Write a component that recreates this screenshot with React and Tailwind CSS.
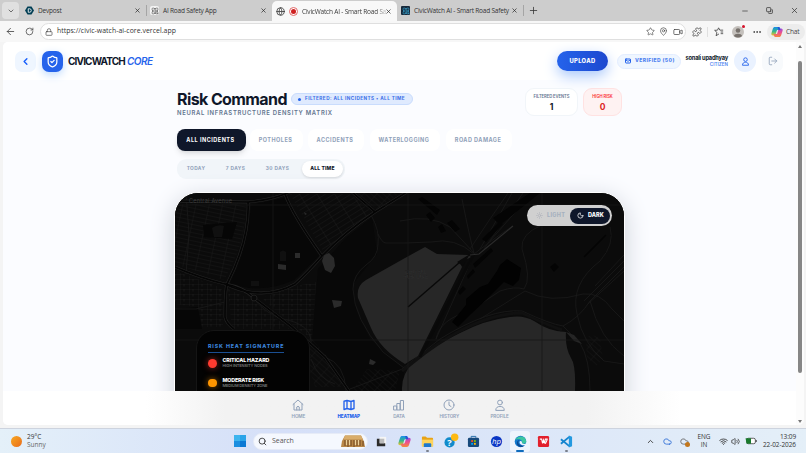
import React from 'react';
import {
  ArrowLeft, RotateCw, Lock, Star, MapPin, Video, Puzzle, Ellipsis, ChevronDown, ChevronLeft, ChevronUp,
  X, Plus, Minus, Copy, Globe, ShieldCheck, Mail, LogOut, Search, Wifi, Volume2, Sun, Moon, Cloud, Atom,
} from 'lucide-react';

const filters = [
  { label: 'ALL INCIDENTS', box: 'w-[69px] mr-[4px] bg-[#0f172a] text-white shadow-md', text: 'tracking-[0.5px]' },
  { label: 'POTHOLES', box: 'w-[53px] mr-[5px] bg-white text-slate-400', text: 'tracking-[0.5px]' },
  { label: 'ACCIDENTS', box: 'w-[56px] mr-[6px] bg-white text-slate-400', text: 'tracking-[0.5px]' },
  { label: 'WATERLOGGING', box: 'w-[70px] mr-[6px] bg-white text-slate-400', text: 'tracking-[0.5px]' },
  { label: 'ROAD DAMAGE', box: 'w-[66px] bg-white text-slate-400', text: 'tracking-[0.46px]' },
];

const ranges = [
  { label: 'TODAY', box: 'w-[38px]' },
  { label: '7 DAYS', box: 'w-[41px]' },
  { label: '30 DAYS', box: 'w-[43px]' },
];

const heatLevels = [
  { title: 'CRITICAL HAZARD', sub: 'HIGH INTENSITY NODES', dot: 'bg-[#ff3b30] shadow-[0_0_6px_#ff3b3099]' },
  { title: 'MODERATE RISK', sub: 'MEDIUM DENSITY ZONE', dot: 'bg-[#ff9500] shadow-[0_0_6px_#ff950099]' },
];

function PersonIcon({ className }) {
  return (
    <svg viewBox="0 0 24 24" className={className} fill="none" stroke="currentColor" strokeWidth="2.400" strokeLinejoin="round">
      <circle cx="12" cy="7" r="4.800" />
      <path d="M4 22c0-5.500 3.500-8 8-8s8 2.500 8 8z" />
    </svg>
  );
}

function CopilotIcon({ className }) {
  return (
    <svg viewBox="0 0 24 24" className={className}>
      <defs>
        <linearGradient id="cpA" x1="0" y1="0" x2="0" y2="1">
          <stop offset="0" stopColor="#1a8fe8" />
          <stop offset="0.5" stopColor="#32b58c" />
          <stop offset="1" stopColor="#f5c426" />
        </linearGradient>
        <linearGradient id="cpB" x1="0" y1="0" x2="0" y2="1">
          <stop offset="0" stopColor="#a04be0" />
          <stop offset="0.5" stopColor="#ee4f8d" />
          <stop offset="1" stopColor="#f58a3c" />
        </linearGradient>
      </defs>
      <path d="M8 2h7c2 0 2.600 1.200 3.100 3L19 8h-5c-2 0-2.500 1-3 3l-1.500 5c-.5 2-1.300 3-3 3H4c-3 0-4-2-3-5l2.500-8C4.500 3 5.500 2 8 2z" fill="url(#cpA)" />
      <path d="M16 22H9c-2 0-2.600-1.200-3.100-3L5 16h5c2 0 2.500-1 3-3l1.500-5c.5-2 1.300-3 3-3H20c3 0 4 2 3 5l-2.500 8c-1 3-2 4-4.500 4z" fill="url(#cpB)" />
      <path d="M13 2h2c2 0 2.600 1.200 3.100 3L19 8h-4z" fill="#2257d6" />
    </svg>
  );
}

function Tab({ icon, title, box, active }) {
  return (
    <div className={`flex h-full items-center ${box} ${active ? 'rounded-t-[5px] bg-[#f8f8f8]' : ''}`}>
      {icon}
      <span className="min-w-0 flex-1 whitespace-nowrap text-[6.500px] tracking-[-0.2px] text-[#333]">{title}</span>
      <X className="mr-[5px] ml-[3px] size-[7px] shrink-0 text-[#222]" strokeWidth={2.300} />
    </div>
  );
}

function TabBar() {
  return (
    <div className="flex h-[21px] items-center bg-[#cdcdcd]">
      <div className="ml-[2px] mr-[2px] flex size-[17px] items-center justify-center rounded-[4px] bg-[#e0e0e0]">
        <ChevronDown className="size-[8px] text-[#333]" strokeWidth={2} />
      </div>
      <Tab
        box="w-[125px] pl-[4px]"
        title="Devpost"
        icon={
          <svg viewBox="0 0 18 18" className="mr-[4px] size-[9px]">
            <path d="M5 1h8l5 8-5 8H5L0 9z" fill="#003e54" />
            <path d="M6.500 5.500h2.500a3.500 3.500 0 0 1 0 7H6.500z" fill="none" stroke="#fff" strokeWidth="1.700" />
          </svg>
        }
      />
      <div className="h-[11px] w-px bg-[#a5a5a5]" />
      <Tab
        box="w-[125px] pl-[3px]"
        title="AI Road Safety App"
        icon={
          <span className="mr-[4px] flex size-[9px] items-center justify-center rounded-[2px] bg-[#f4f4f4]">
            <Atom className="size-[8px] text-[#555]" />
          </span>
        }
      />
      <Tab
        active
        box="w-[125px] mt-[2px] pl-[4px]"
        title={<span className="bg-gradient-to-r from-[#333] from-88% to-[#333]/20 bg-clip-text text-transparent">CivicWatch AI - Smart Road Sa</span>}
        icon={
          <>
            <Globe className="mr-[4px] size-[9px] shrink-0 text-[#444]" strokeWidth={2.300} />
            <span className="mr-[4px] flex size-[9px] shrink-0 items-center justify-center rounded-full border border-[#e06a6a] bg-white">
              <span className="size-[5px] rounded-full bg-[#cf2020]" />
            </span>
          </>
        }
      />
      <Tab
        box="w-[126px] pl-[4px]"
        title="CivicWatch AI - Smart Road Safety"
        icon={
          <span className="mr-[4px] flex size-[9px] shrink-0 items-center justify-center rounded-[1px] bg-[#16283a]">
            <Atom className="size-[8px] text-[#3aa6d0]" />
          </span>
        }
      />
      <div className="h-[11px] w-px bg-[#a5a5a5]" />
      <Plus className="ml-[4px] size-[11px] text-[#333]" strokeWidth={1.700} />
      <div className="ml-auto mr-[7px] flex items-center gap-[17px] text-[#333]">
        <Minus className="size-[8px]" />
        <Copy className="size-[7px] -scale-x-100 rotate-90" strokeWidth={2.500} />
        <X className="size-[9px]" strokeWidth={1.900} />
      </div>
    </div>
  );
}

function Toolbar() {
  return (
    <div className="flex h-[21px] items-center bg-[#f7f7f7] text-[#444]">
      <ArrowLeft className="ml-[5px] size-[11px]" strokeWidth={1.800} />
      <RotateCw className="ml-[9px] mr-[6px] size-[9px]" strokeWidth={2} />
      <div className="flex h-[17px] w-[646px] items-center rounded-full border border-[#dfdfdf] bg-white pl-[4px] pr-[2px]">
        <Lock className="size-[8px]" strokeWidth={2} />
        <span className="ml-[4px] text-[6.900px] tracking-[0.04px] text-[#333]">https://civic-watch-ai-core.vercel.app</span>
        <Star className="ml-auto size-[9px]" strokeWidth={1.700} />
        <MapPin className="ml-[4px] size-[9px]" strokeWidth={1.800} />
        <Video className="ml-[5px] size-[10px]" strokeWidth={1.800} />
      </div>
      <Puzzle className="ml-[6px] size-[10px]" strokeWidth={1.900} />
      <div className="ml-[5px] h-[10px] w-px bg-[#e0e0e0]" />
      <svg viewBox="0 0 24 24" className="ml-[6px] size-[10px]" fill="none" stroke="currentColor" strokeWidth="2" strokeLinejoin="round">
        <path d="M12 16.500 5 21l2-8-5.500-5 7-.5L11 2l3 5.500h8M16 12h6M16 16h6" />
      </svg>
      <div className="relative ml-[8px] size-[12px] overflow-visible rounded-full bg-[#c4c0bc]">
        <svg viewBox="0 0 12 12" className="size-[12px]" fill="#77716c">
          <circle cx="6" cy="4.500" r="2.300" />
          <path d="M2 10c.5-3 7.500-3 8 0a6 6 0 0 1-8 0z" />
        </svg>
        <span className="absolute -right-px -top-px size-[3px] rounded-full bg-[#d3122a]" />
      </div>
      <Ellipsis className="ml-[8px] size-[10px]" strokeWidth={2.300} />
      <div className="ml-[5px] flex h-[16px] w-[38px] items-center rounded-full bg-[#ececec] pl-[4px]">
        <CopilotIcon className="size-[12px]" />
        <span className="ml-[3px] text-[6.600px] tracking-[-0.2px]">Chat</span>
      </div>
    </div>
  );
}

function Header() {
  return (
    <header className="relative z-10 flex h-[38px] shrink-0 items-center bg-white pl-[12px] pr-[13px]">
      <button className="flex size-[21px] items-center justify-center rounded-[7px] bg-[#eff6ff]">
        <ChevronLeft className="size-[11px] text-blue-600" strokeWidth={3} />
      </button>
      <div className="ml-[6px] flex size-[21px] items-center justify-center rounded-[7px] bg-[#2563eb] shadow-[0_3px_8px_#bfdbfe]">
        <ShieldCheck className="size-[13px] text-white" strokeWidth={2.300} />
      </div>
      <span className="ml-[5px] w-[59px] whitespace-nowrap text-[10px] font-bold tracking-[-0.84px] text-[#0f172a]">CIVICWATCH</span>
      <span className="text-[10px] font-semibold italic tracking-[-0.5px] text-[#2563eb]">CORE</span>
      <button className="ml-auto flex h-[20px] w-[51px] items-center justify-center rounded-full bg-gradient-to-r from-[#2563eb] to-[#1d48cf] text-[5.800px] font-extrabold tracking-[0.35px] text-white shadow-[0_5px_14px_#a9c8fb]">
        UPLOAD
      </button>
      <div className="ml-[9px] flex h-[15px] w-[64px] items-center rounded-full border border-[#e3edff] bg-[#eff6ff] pl-[7px] text-[#2563eb]">
        <Mail className="mr-[4px] size-[6px]" strokeWidth={4} />
        <span className="whitespace-nowrap text-[5px] font-extrabold tracking-[0.42px] text-[#4f83f0]">VERIFIED (50)</span>
      </div>
      <div className="ml-[5px] flex w-[42px] flex-col items-end whitespace-nowrap">
        <span className="text-[5.700px] font-bold leading-[6px] tracking-[-0.2px] text-[#0f172a]">sonali upadhyay</span>
        <span className="mt-[1px] text-[4.500px] font-semibold leading-[5px] tracking-[0.05px] text-[#4f83f0]">CITIZEN</span>
      </div>
      <div className="ml-[6px] flex size-[22px] items-center justify-center rounded-full bg-[#eaf2ff]">
        <PersonIcon className="size-[9px] text-[#2563eb]" />
      </div>
      <div className="ml-[6px] flex size-[21px] items-center justify-center rounded-[7px] bg-[#f8fafc]">
        <LogOut className="size-[10px] text-slate-400" strokeWidth={2} />
      </div>
    </header>
  );
}

function CityMap() {
  const arterial = [
    'M175 202 L248 203 Q270 201 285 195 L290 193',
    'M248 203 Q250 240 227 285 Q225 292 225 318 Q226 324 234 330',
    'M285 195 Q292 215 322 257',
    'M175 268 Q200 279 225 285 Q243 288 254 299 L292 328 L325 358 L349 392',
    'M225 285 Q262 303 295 285 Q308 273 322 257 Q345 233 375 213 L407 193',
    'M352 193 L375 213',
  ];
  const minor = [
    'M371 216 Q380 232 378 245 Q378 258 366 266 Q353 276 353 290 Q354 320 383 353 L404 369',
    'M378 235 Q382 244 386 244 H405 L431 243 Q455 238 474 255',
    'M175 310 H196 L225 303 M186 194 L189 235 L186 275 M254 300 Q266 315 283 320 Q310 325 311 342',
    'M474 255 L436 340 M436 340 Q440 320 470 312 L500 292 Q515 287 524 290 Q532 280 522 250 Q520 235 542 226',
    'M480 320 L525 292 Q550 305 583 295 Q600 293 612 310 L624 322',
    'M400 222 Q430 215 450 228 L474 254 M462 200 Q470 240 474 254',
    'M402 370 L440 340 Q490 309 522 312 Q550 325 563 327 Q580 318 590 302 L624 268',
    'M474 255 Q500 235 513 227',
    'M610 228 Q615 245 600 262 Q570 285 577 315 Q583 345 604 362 L624 365 M590 302 Q600 340 624 357 M563 327 L580 344 Q590 360 590 392',
    'M480 250 L512 194 M484 250 L523 194 M490 242 L532 194 M470 250 L490 220 L508 194',
    'M584 302 L624 262 M588 305 L624 272 M595 287 L624 256',
    'M325 358 Q345 365 346 392 M311 360 Q318 380 335 385 M405 369 L350 390',
  ];
  return (
    <svg viewBox="175 194 449 198" className="h-full w-full" preserveAspectRatio="xMinYMin slice" fill="none">
      <defs>
        <pattern id="blocksA" width="13" height="4" patternUnits="userSpaceOnUse" patternTransform="rotate(12)">
          <path d="M0 0H13M0 0V4" stroke="#202020" strokeWidth="0.700" />
        </pattern>
        <pattern id="blocksB" width="15" height="4.500" patternUnits="userSpaceOnUse" patternTransform="rotate(-32)">
          <path d="M0 0H15M0 0V4.500" stroke="#1f1f1f" strokeWidth="0.700" />
        </pattern>
        <pattern id="blocksC" width="9" height="5" patternUnits="userSpaceOnUse">
          <path d="M0 0H9M0 0V5M4 0V2.500" stroke="#1c1c1c" strokeWidth="0.700" />
        </pattern>
        <pattern id="blocksD" width="10" height="4" patternUnits="userSpaceOnUse" patternTransform="rotate(42)">
          <path d="M0 0H10M0 0V4" stroke="#1d1d1d" strokeWidth="0.600" />
        </pattern>
      </defs>
      <rect x="175" y="194" width="449" height="198" fill="#0b0b0b" />
      <path d="M345 240 L372 218 L377 255 L353 285 L356 310 L370 340 L404 370 L404 392 H350 L312 345 L318 270z" fill="#080808" />
      <path d="M251 206 L284 199 L319 257 L294 281 Q260 296 230 284 Q248 250 251 206z" fill="#070707" />
      <path d="M175 205 H246 Q246 245 224 281 L175 265z" fill="url(#blocksA)" />
      <path d="M203 226 L237 223 L232 240 L204 238z M175 310 L198 308 L202 330 H175z" fill="#060606" />
      <path d="M290 195 H350 L372 213 L323 252z" fill="url(#blocksB)" />
      <path d="M354 194 H400 L377 210z" fill="url(#blocksD)" />
      <path d="M175 272 L222 289 L223 328 H202 L198 308 L175 305z" fill="url(#blocksC)" />
      <path d="M228 290 L252 301 L290 330 H232z M262 299 L296 287 L316 283 L312 340 L285 320z" fill="url(#blocksC)" />
      <path d="M292 330 L312 340 L325 355 L346 388 L315 388 L300 340z M367 370 L400 372 L395 392 H352z" fill="url(#blocksD)" />
      <path d="M175 203 H248 L286 195" stroke="#202020" strokeWidth="0.600" />

      <path d="M405 259 L425 248 L437 255 L468 256 L471 258 L460 264 L462 268 L418 357 L405 365 Q380 350 371 329 L358 299 Q356 287 366 281z" fill="#272727" />
      <path d="M402 392 Q401 375 414 363 Q440 343 460 334 Q485 321 510 318 Q524 316 534 322 Q550 333 566 333 Q565 349 571 359 Q576 366 575 392z" fill="#272727" />
      <path d="M457 263 L470 255 L463 267z" fill="#0a0a0a" />
      <path d="M460 263 L408 308" stroke="#090909" strokeWidth="1.500" />
      <path d="M324 256 L329 254 L334 259 L335 267 L331 274 L325 271 L322 262z M295 254 h5v5h-5z M278 265 l8 1v5l-8-1z M332 301 l10 1 -1 5 -7 2z M370 360 l6 3 -3 3 -4-1z M304 213 l3 2 -2 1z" fill="#2b2b2b" />
      <path d="M280 253 q3-3 6 0 v9h-6z M212 229 q5-4 12-2 l-2 11 -8 0z M251 282 h8v5h-8z" fill="#101010" />

      {minor.map((d) => <path key={d} d={d} stroke="#1b1b1b" strokeWidth="0.800" />)}
      {arterial.map((d) => <path key={d} d={d} stroke="#242424" strokeWidth="2.800" />)}
      {arterial.map((d) => <path key={d + 'in'} d={d} stroke="#050505" strokeWidth="1.700" />)}
      <path d="M402 372 L425 354 Q480 314 522 314 Q545 325 562 331" stroke="#101010" strokeWidth="3" />
      <path d="M474 255 L420 358" stroke="#090909" strokeWidth="2.500" />
      <path d="M470 256 L479 255 L513 227" stroke="#2b2b2b" strokeWidth="1.200" />
      <path d="M566 333 L574 336 L582 345 L574 342z" fill="#252525" />
      <circle cx="254" cy="299" r="3" fill="#090909" stroke="#242424" strokeWidth="0.800" />

      <path d="M497 272 L500 266 L507 260 L521 269 L519 281 L513 287 L504 283 L487 300 L470 316 L458 328 L452 323 L466 306 L466 300 L480 288 L488 285z" fill="#020202" />
      <path d="M418 200 l4-2 18 13 -3 5z M426 216 l4-3 5 6 -4 4z M438 228 l4-3 4 7 -5 2z M447 224 l5-3 8 9 -5 3z M550 268 l5-4 4 4 -5 5z M493 219 L530 194 h10 L500 226z M482 240 l18-18 3 3 -17 18z M473 265 l18-16 2 3 -18 17z M467 277 l6-7 2 3 -7 7z M458 293 l5-6 3 3 -6 6z" fill="#040404" />
      <path d="M584 258 L606 236" stroke="#040404" strokeWidth="1.500" />
      <path d="M586 338 q8-4 14 2 l3 20 -8 8 -8-10z" fill="url(#blocksD)" />
      <path d="M273 194V392 M408 194V392 M542 194V392 M175 206H624 M175 341H624" stroke="#181818" strokeWidth="0.800" />
      <text x="189" y="204" fontSize="5.500" fill="#3c3c3c" textLength="43">Central Avenue</text>
      <g fill="#0c0c0c" stroke="#444" strokeWidth="0.200" fontSize="4.600" textAnchor="middle">
        <text x="415.500" y="275">CENTRAL</text>
        <text x="415.500" y="280">PARK LAKE</text>
      </g>
    </svg>
  );
}

function MapPanel() {
  return (
    <div className="relative -mx-[3px] mt-[13px] h-[260px] shrink-0 overflow-hidden rounded-[24px] border-[1.500px] border-white bg-[#0b0b0b] shadow-[0_6px_24px_#cbd0d8]">
      <div className="h-[198px]">
        <CityMap />
      </div>
      <div className="absolute right-[12px] top-[12px] flex h-[21px] w-[85px] items-center rounded-full bg-[#d0d0d0] pl-[9px] text-[5.500px] font-extrabold">
        <Sun className="size-[7px] text-[#b0b5bd]" strokeWidth={2.500} />
        <span className="ml-[4px] tracking-[0.3px] text-[#a6b0bf]">LIGHT</span>
        <span className="absolute right-[2px] flex h-[16px] w-[40px] items-center rounded-full bg-[#0f172a] pl-[7px] text-white">
          <Moon className="mr-[4px] size-[7px]" strokeWidth={2.500} />
          <span className="tracking-[0.05px]">DARK</span>
        </span>
      </div>
      <div className="absolute left-[21px] top-[137px] h-[110px] w-[114px] rounded-[18px] border border-[#151515] bg-[#030303] pl-[11px] pt-[12px]">
        <div className="mb-px h-[9.500px] w-fit whitespace-nowrap border-b border-[#1b4f92] text-[5.300px] font-extrabold leading-[6px] tracking-[0.86px] text-[#3b82d9]">
          RISK HEAT SIGNATURE
        </div>
        {heatLevels.map((level) => (
          <div key={level.title} className="flex h-[19.500px] items-center">
            <span className={`size-[8.500px] shrink-0 rounded-full ${level.dot}`} />
            <div className="-mt-px ml-[6px] flex flex-col whitespace-nowrap">
              <span className="text-[5.300px] font-extrabold leading-[6px] tracking-[-0.16px] text-white">{level.title}</span>
              <span className="text-[4px] font-semibold leading-[5px] tracking-[-0.13px] text-[#777]">{level.sub}</span>
            </div>
          </div>
        ))}
      </div>
    </div>
  );
}

function RiskCommand() {
  return (
    <main className="flex flex-col pl-[174px] pr-[174px] pt-[8px]">
      <div className="flex h-[41px] items-start">
        <div>
          <div className="flex h-[22px] items-center">
            <h1 className="w-[110px] whitespace-nowrap text-[16px] font-bold leading-none tracking-[-0.6px] text-[#0f172a]">Risk Command</h1>
            <div className="ml-[4px] flex h-[12px] w-[122px] items-center rounded-full border border-[#c9dcfd] bg-[#dfeafe] pl-[6px]">
              <span className="mr-[4px] size-[3px] rounded-full bg-[#2563eb]" />
              <span className="whitespace-nowrap text-[4.700px] font-bold tracking-[0.42px] text-[#3b6fe8]">FILTERED: ALL INCIDENTS • ALL TIME</span>
            </div>
          </div>
          <p className="mt-px text-[5.900px] font-semibold leading-[4px] tracking-[0.7px] text-slate-500">NEURAL INFRASTRUCTURE DENSITY MATRIX</p>
        </div>
        <div className="ml-auto flex gap-[5px] text-center">
          <div className="h-[28px] w-[53px] rounded-[9px] border border-slate-100 bg-white pt-[5px]">
            <p className="text-[4.200px] font-semibold leading-[5px] tracking-[-0.08px] text-slate-500">FILTERED EVENTS</p>
            <p className="mt-[2px] text-[8.500px] font-bold leading-[12px] text-[#0f172a]">1</p>
          </div>
          <div className="h-[28px] w-[39px] rounded-[9px] border border-red-100 bg-[#fef2f2] pt-[5px]">
            <p className="text-[4.200px] font-semibold leading-[5px] tracking-[-0.08px] text-red-500">HIGH RISK</p>
            <p className="mt-[2px] text-[8.500px] font-bold leading-[12px] text-[#dc2626]">0</p>
          </div>
        </div>
      </div>

      <div className="-ml-[0.500px] flex h-[22px]">
        {filters.map((f) => (
          <button key={f.label} className={`whitespace-nowrap rounded-[8px] pr-px text-center text-[5.500px] font-bold ${f.box} ${f.text}`}>
            {f.label}
          </button>
        ))}
      </div>

      <div className="mt-[8px] flex h-[20px] w-[168px] items-center rounded-[9px] bg-[#f1f5f9] text-[4.800px] font-bold tracking-[0.4px] text-slate-400">
        {ranges.map((r) => (
          <span key={r.label} className={`text-center ${r.box}`}>{r.label}</span>
        ))}
        <span className="ml-[3px] flex h-[16px] w-[41px] items-center justify-center rounded-[8px] bg-white text-[5px] font-extrabold tracking-[0.15px] text-[#0f172a] shadow-sm">
          ALL TIME
        </span>
      </div>

      <MapPanel />
    </main>
  );
}

function NavItem({ label, active, children }) {
  return (
    <div className={`flex w-[50.300px] flex-col items-center ${active ? 'text-[#2563eb]' : 'text-slate-400'}`}>
      <svg viewBox="0 0 24 24" className="size-[12px]" fill="none" stroke="currentColor" strokeWidth={active ? 2.700 : 2} strokeLinejoin="round" strokeLinecap="round">
        {children}
      </svg>
      <span className={`mt-[3px] text-[4.600px] leading-[5px] tracking-[-0.1px] ${active ? 'font-extrabold' : 'font-semibold'}`}>{label}</span>
    </div>
  );
}

function BottomNav() {
  return (
    <nav className="absolute inset-x-0 bottom-0 z-10 flex h-[34px] justify-center bg-gradient-to-r from-white from-18% via-[#f2f2f2] via-28% to-[#f2f2f2] pr-px pt-[7.500px]">
      <div className="absolute inset-y-0 right-0 w-[210px] bg-gradient-to-r from-[#f2f2f2] to-white to-45%" />
      <NavItem label="HOME">
        <path d="M2 11 12 2l10 9M4 10v12h16V10M9.500 22v-6q2.500-3 5 0v6" />
      </NavItem>
      <NavItem label="HEATMAP" active>
        <path d="M2 4.500 8 3v16l-6 2zM8 3l8 2v16l-8-2zM16 5l6-2v16l-6 2z" />
      </NavItem>
      <NavItem label="DATA">
        <path d="M2 14h5.500v8H2zM8.500 9H14v13H8.500zM15.500 3H21v19h-5.500z" />
      </NavItem>
      <NavItem label="HISTORY">
        <circle cx="12" cy="12" r="10" />
        <path d="M12 6v6.500l4 2.500" />
      </NavItem>
      <NavItem label="PROFILE">
        <circle cx="12" cy="7" r="4.800" />
        <path d="M3.500 22c0-5 3.500-7 8.500-7s8.500 2 8.500 7z" />
      </NavItem>
    </nav>
  );
}

function TaskIcon({ children, active, running }) {
  return (
    <div className={`relative flex h-[21px] w-[20px] items-center justify-center rounded-[3px] ${active ? 'bg-[#eef4fd]' : ''}`}>
      <svg viewBox="0 0 14 14" className="size-[13px] overflow-visible">{children}</svg>
      {active && <span className="absolute bottom-0 h-[1.500px] w-[8px] rounded-full bg-[#0f6cbd]" />}
      {running && <span className="absolute bottom-0 h-[1.500px] w-[3px] rounded-full bg-[#7a808c]" />}
    </div>
  );
}

function Taskbar() {
  return (
    <div className="flex h-[25px] items-center border-t border-[#cdd3de] bg-gradient-to-r from-[#e4f0f9] via-[#d5dff8] via-35% to-[#e4eff8] text-[6.500px] text-[#333]">
      <div className="ml-[11px] size-[11px] rounded-full bg-gradient-to-br from-[#f6a821] to-[#e96b1c]" />
      <div className="ml-[5px] w-[207px] leading-[8.500px]">
        <p>29°C</p>
        <p className="text-[#666]">Sunny</p>
      </div>
      <div className="grid size-[12px] grid-cols-2 gap-[0.700px]">
        <span className="bg-[#3db4ee]" />
        <span className="bg-[#2aa3e8]" />
        <span className="bg-[#1a8ee0]" />
        <span className="bg-[#0a78d4]" />
      </div>
      <div className="ml-[7px] flex h-[17px] w-[115px] items-center rounded-full border border-[#e6ebf7] bg-[#f5f8fe] pl-[4px]">
        <Search className="size-[9px]" strokeWidth={2.300} />
        <span className="ml-[5px] text-[7px] tracking-[-0.05px] text-[#555]">Search</span>
        <svg viewBox="0 0 26 14" className="ml-auto mr-[1px] h-[14px] w-[26px]">
          <path d="M5 1.500h16l3 6 1 5.500H1L2 7z" fill="#b98747" />
          <path d="M5 1.500h16l2 4H3.500z" fill="#d9ad6b" />
          <path d="M5 6v6M8 6v7M11 6v6M14 6v7M17 6v6M20 6v6M23 7v5" stroke="#6e4520" strokeWidth="1" />
          <path d="M6.500 6v5M9.500 6v5M15.500 6v5M18.500 6v5" stroke="#ecd19a" strokeWidth="1.200" />
        </svg>
      </div>
      <div className="ml-[3px] flex gap-[3.200px]">
        <TaskIcon>
          <path d="M5 2h7v8H5z" fill="#f5f5f5" />
          <path d="M2 4h3v5h6v3H2z" fill="#2b2b2b" />
          <path d="M5 4h5v5H5z" fill="#bcbcbc" />
        </TaskIcon>
        <TaskIcon><CopilotIcon className="size-[14px]" /></TaskIcon>
        <TaskIcon running>
          <path d="M1 2.500q0-1 1-1h3l1.500 1.500H12q1 0 1 1V12H1z" fill="#e8a317" />
          <path d="M1 5h12v7.500H1z" fill="#ffd45c" />
          <path d="M4 9h6q1 0 1 1v3H3v-3q0-1 1-1z" fill="#1d78cf" />
        </TaskIcon>
        <TaskIcon>
          <circle cx="6" cy="8" r="5.500" fill="#118bcb" />
          <text x="6" y="11.500" fontSize="10" fontWeight="bold" fill="#fff" textAnchor="middle">?</text>
          <circle cx="11.500" cy="2.500" r="4" fill="#fdb913" />
        </TaskIcon>
        <TaskIcon>
          <path d="M4.500 3V1.500h5V3" fill="none" stroke="#1e6aa8" />
          <rect x="1" y="3" width="12" height="10" rx="1.500" fill="#184a7c" />
          <path d="M4.500 5.500h2v2h-2z" fill="#f25022" />
          <path d="M7.500 5.500h2v2h-2z" fill="#7fba00" />
          <path d="M4.500 8.500h2v2h-2z" fill="#00a4ef" />
          <path d="M7.500 8.500h2v2h-2z" fill="#ffb900" />
        </TaskIcon>
        <TaskIcon>
          <circle cx="7" cy="7" r="6" fill="#0a36c4" />
          <text x="7" y="9.500" fontSize="8.500" fontStyle="italic" fill="#fff" textAnchor="middle">hp</text>
        </TaskIcon>
        <TaskIcon active>
          <circle cx="7" cy="7" r="6.200" fill="#1479cd" />
          <path d="M1 6C2 1 12-1 13.200 6.500c.3 3-3.500 3.500-4.700 2.500C9.500 7 8 4.500 5 4.500 3 4.500 1.500 5 1 6z" fill="#3cc6a0" />
          <path d="M6 5.500c-3 2-1 7 5 6-3 3-8 1-8-2.500 0-2 1.500-3.500 3-3.500z" fill="#0c4a94" />
          <path d="M7 6.500c2 0 1.500 2 1.700 2.500 1.500 1.200 4 .8 4.500-.5L14 10l-2 1c-3 .5-6-1-6-3 0-1 .5-1.500 1-1.500z" fill="#eef4fd" />
        </TaskIcon>
        <TaskIcon>
          <rect x="1" y="1" width="12" height="12" rx="1.500" fill="#e2202c" />
          <path d="M3 4.500h2L6 9l1-3.500L8 9l1-4.500h2.500M9 9.500 11 5" fill="none" stroke="#fff" strokeWidth="1.200" />
        </TaskIcon>
        <TaskIcon running>
          <path d="M1 4.500 10 12M1 9.500 10 2" stroke="#1585cf" strokeWidth="2" />
          <path d="M9.500.5 13 2v10l-3.500 1.500z" fill="#2399e0" />
        </TaskIcon>
      </div>
      <div className="ml-auto mr-[10px] flex items-center">
        <ChevronUp className="size-[9px]" strokeWidth={2.300} />
        <Cloud className="ml-[8px] size-[9px] text-[#2f6fd6]" strokeWidth={2.300} />
        <span className="relative ml-[8px] size-[9px]">
          <Cloud className="size-[9px] text-[#666]" strokeWidth={2.300} />
          <span className="absolute -bottom-px -right-px size-[5px] rounded-full bg-[#c2761b]" />
        </span>
        <div className="ml-[8px] w-[14px] text-center text-[6.400px] leading-[8.500px]">
          <p>ENG</p>
          <p>IN</p>
        </div>
        <Wifi className="ml-[8px] size-[9px]" strokeWidth={2.300} />
        <Volume2 className="ml-[3px] size-[9px]" strokeWidth={2} />
        <svg viewBox="0 0 22 14" className="ml-[5px] h-[8px] w-[12px]">
          <rect x="3" y="2" width="16" height="10" rx="3" fill="#fff" stroke="#444" strokeWidth="1.500" />
          <path d="M1 2h10v10H3z" fill="#187a2c" />
          <path d="M20.500 5v4" stroke="#444" strokeWidth="2" />
        </svg>
        <div className="w-[39px] whitespace-nowrap text-right leading-[8.500px]">
          <p className="tracking-[-0.1px]">13:09</p>
          <p className="-ml-4 tracking-[-0.08px]">22-02-2026</p>
        </div>
      </div>
    </div>
  );
}

export default function App() {
  return (
    <div className="flex h-[453px] w-[806px] flex-col overflow-hidden bg-[#f1f1f1] font-['Open_Sans','Noto_Sans',sans-serif]">
      <TabBar />
      <Toolbar />
      <div className="flex h-[386px] bg-[#f4f4f4] pb-[3px] pl-[3px] pr-[2px]">
        <div className="relative flex w-[793px] flex-col overflow-hidden rounded-l-[5px] bg-[#fbfcff] font-['Inter',sans-serif]">
          <Header />
          <RiskCommand />
          <BottomNav />
        </div>
        <div className="flex flex-1 flex-col items-center rounded-r-[5px] bg-[#fcfcfc] pb-[2px] pt-[3px]">
          <span className="border-x-[2px] border-b-[3px] border-x-transparent border-b-[#777]" />
          <span className="mt-[13px] h-[312px] w-[4px] rounded-full bg-[#868686]" />
          <span className="mt-auto border-x-[2px] border-t-[3px] border-x-transparent border-t-[#777]" />
        </div>
      </div>
      <Taskbar />
    </div>
  );
}
